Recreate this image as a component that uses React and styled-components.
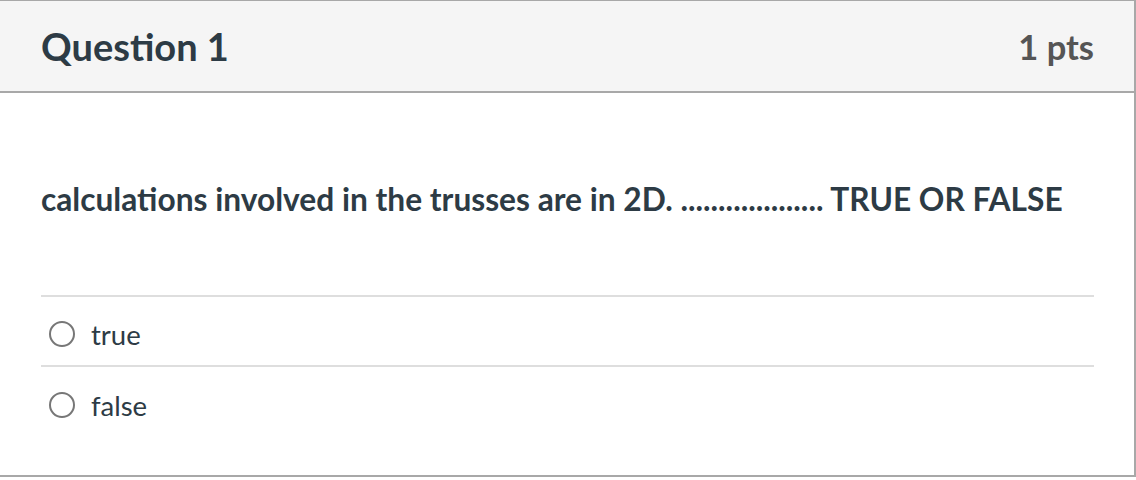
import React from 'react'
import styled, { createGlobalStyle } from 'styled-components'

const GlobalStyle = createGlobalStyle`
  html, body {
    margin: 0;
    padding: 0;
    background: #fff;
  }
  body {
    font-family: Lato, "Liberation Sans", sans-serif;
    color: #2d3b45;
  }
`

const Card = styled.div`
  width: 1136px;
  height: 477px;
  box-sizing: border-box;
  border: 2px solid #a8a8a8;
  border-top-width: 1px;
  border-left: none;
  display: flex;
  flex-direction: column;
  background: #fff;
`

const Header = styled.div`
  height: 92px;
  box-sizing: border-box;
  flex: none;
  display: flex;
  align-items: center;
  justify-content: space-between;
  padding: 0 40px 0 41px;
  background: #f5f5f5;
  border-bottom: 2px solid #a8a8a8;
`

const Title = styled.h2`
  margin: 0;
  font-size: 38px;
  font-weight: 700;
  color: #2d3b45;
`

const Points = styled.div`
  font-size: 34.5px;
  font-weight: 700;
  color: #555555;
`

const Body = styled.div`
  padding: 0 40px 0 41px;
  display: flex;
  flex-direction: column;
`

const QuestionText = styled.p`
  margin: 0;
  height: 204px;
  padding-top: 10px;
  display: flex;
  align-items: center;
  font-size: 31.7px;
  font-weight: 700;
  color: #2d3b45;
  border-bottom: 2px solid #dedede;
  box-sizing: border-box;
`

const Answers = styled.div`
  display: flex;
  flex-direction: column;
`

const Answer = styled.label`
  height: 70px;
  box-sizing: border-box;
  display: flex;
  align-items: center;
  gap: 16px;
  padding: 6px 0 0 8px;
  font-size: 27.5px;
  color: #2d3b45;
  border-bottom: ${(p) => (p.$last ? 'none' : '2px solid #dedede')};
`

const Radio = styled.span`
  width: 22px;
  height: 22px;
  border: 2px solid #777;
  border-radius: 50%;
  flex: none;
`

const answers = ['true', 'false']

export default function App() {
  return (
    <>
      <GlobalStyle />
      <Card>
        <Header>
          <Title>Question 1</Title>
          <Points>1 pts</Points>
        </Header>
        <Body>
          <QuestionText>
            calculations involved in the trusses are in 2D. ................... TRUE OR FALSE
          </QuestionText>
          <Answers>
            {answers.map((a, i) => (
              <Answer key={a} $last={i === answers.length - 1}>
                <Radio />
                {a}
              </Answer>
            ))}
          </Answers>
        </Body>
      </Card>
    </>
  )
}
